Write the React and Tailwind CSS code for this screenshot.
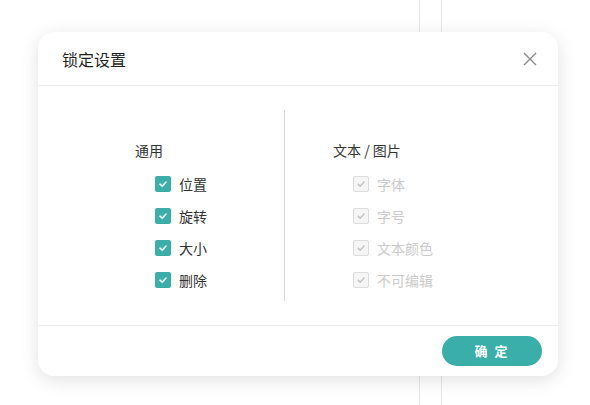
import React from 'react';

const font = { fontFamily: '"Noto Sans CJK SC", "Noto Sans", sans-serif' };

const general = ['位置', '旋转', '大小', '删除'];
const textImage = ['字体', '字号', '文本颜色', '不可编辑'];

function Check({ disabled }) {
  return (
    <span
      className={
        disabled
          ? 'flex h-4 w-4 items-center justify-center rounded-[2px] border border-[#dcdcdc] bg-[#f5f5f5]'
          : 'flex h-4 w-4 items-center justify-center rounded-[2px] bg-[#3aaea9]'
      }
    >
      <svg width="10" height="10" viewBox="0 0 10 10" fill="none">
        <path
          d="M2 5.2 L4.2 7.2 L8 3"
          stroke={disabled ? '#c4c4c4' : '#fff'}
          strokeWidth="1.6"
          strokeLinecap="round"
          strokeLinejoin="round"
        />
      </svg>
    </span>
  );
}

function Group({ title, items, disabled }) {
  return (
    <div className="flex flex-col">
      <div className="flex h-8 items-center pb-[3px] text-[14px] text-[#333]">{title}</div>
      {items.map((label) => (
        <label key={label} className="flex h-8 items-center gap-2 pl-5">
          <Check disabled={disabled} />
          <span className={disabled ? 'text-[14px] text-[#cacaca]' : 'text-[14px] text-[#333]'}>{label}</span>
        </label>
      ))}
    </div>
  );
}

export default function App() {
  return (
    <div className="relative h-[405px] w-[590px] overflow-hidden bg-white" style={font}>
      {/* page behind the dialog */}
      <div className="flex h-full">
        <div className="w-[419px]" />
        <div className="w-[23px] border-x border-[#e6e6e6]" />
      </div>

      <div className="absolute left-[38px] top-[32px] flex h-[344px] w-[520px] flex-col rounded-[16px] bg-white shadow-[0_4px_18px_rgba(0,0,0,0.12)]">
        <div className="flex h-[54px] items-center justify-between border-b border-[#ececec] pl-[24px] pr-[18px]">
          <span className="text-[16px] font-normal text-[#1f1f1f]">锁定设置</span>
          <button className="flex h-5 w-5 items-center justify-center">
            <svg width="14" height="14" viewBox="0 0 14 14">
              <path d="M1 1 L13 13 M13 1 L1 13" stroke="#8a8a8a" strokeWidth="1.4" />
            </svg>
          </button>
        </div>

        <div className="flex flex-1 pt-[24px] pb-[24px]">
          <div className="w-[246px] pl-[97px] pt-[26px]">
            <Group title="通用" items={general} />
          </div>
          <div className="w-px bg-[#d6d6d6]" />
          <div className="pl-[48px] pt-[26px]">
            <Group title="文本 / 图片" items={textImage} disabled />
          </div>
        </div>

        <div className="flex h-[51px] items-start justify-end border-t border-[#ececec] pr-[16px] pt-[10px]">
          <button className="h-[30px] w-[100px] rounded-full bg-[#3aaea9] text-[13px] font-bold tracking-[2px] text-white">
            确 定
          </button>
        </div>
      </div>
    </div>
  );
}
